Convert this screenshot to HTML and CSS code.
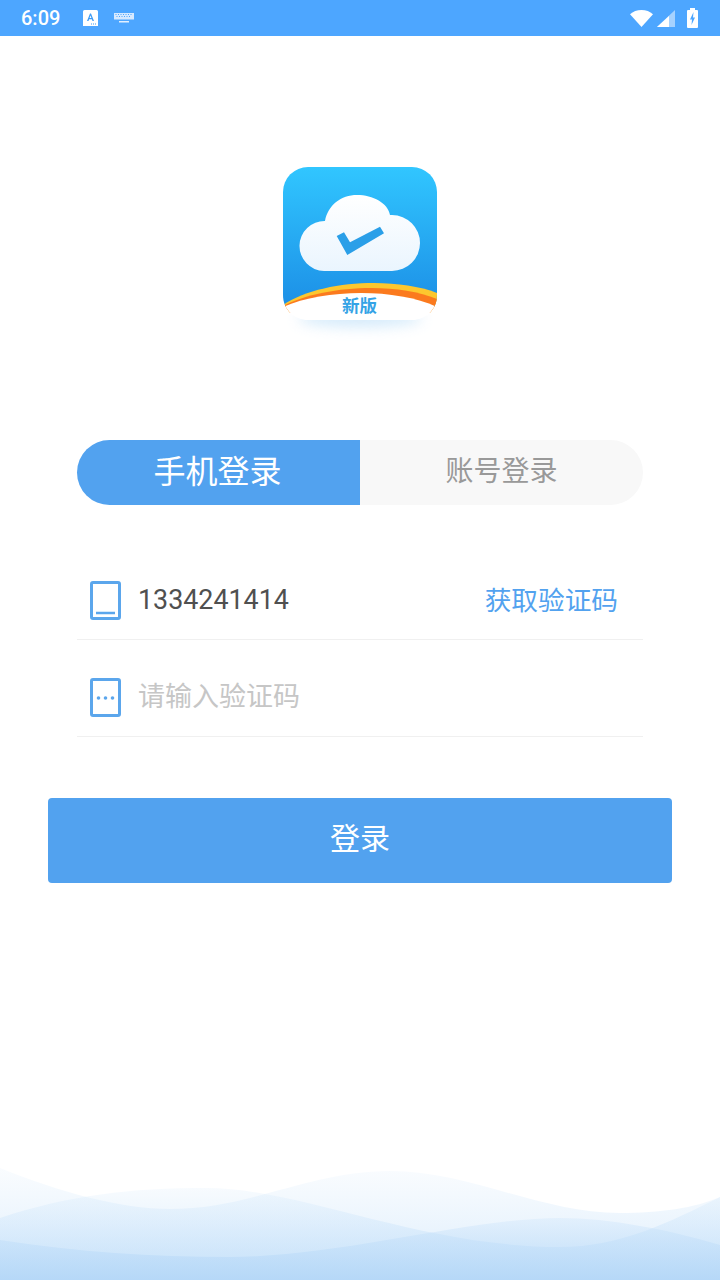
FILE: index.html
```html
<!DOCTYPE html>
<html lang="zh-CN">
<head>
<meta charset="utf-8">
<title>登录</title>
<link rel="stylesheet" href="styles.css">
</head>
<body>
<div class="screen">
  <header class="status-bar">
    <div class="status-left">
      <span class="clock">6:09</span>
      <svg class="ico-input" viewBox="0 0 15 16" width="15" height="16"><path d="M0 1.500A1.500 1.500 0 0 1 1.500 0H13.500A1.500 1.500 0 0 1 15 1.500V16H0Z" fill="#fff"/><path d="M4 11 7 3.500H8L11 11H9.500L8.900 9.300H6.100L5.500 11ZM6.600 8H8.400L7.500 5.400Z" fill="#3f9cf5"/><path d="M8 13.500h1v1H8zM10 13.500h1v1h-1zM12 13.500h1v1h-1z" fill="#3f9cf5"/></svg>
      <svg class="ico-keys" viewBox="0 0 20 10" width="20" height="10"><path d="M0 0h20v6.500H0z" fill="#d6e9ff"/><path d="M1.500 1h1v1h-1zM4 1h1v1H4zM6.500 1h1v1h-1zM9 1h1v1H9zM11.500 1h1v1h-1zM14 1h1v1h-1zM16.500 1h1v1h-1zM2.500 3h1v1h-1zM5 3h1v1H5zM7.500 3h1v1h-1zM10 3h1v1h-1zM12.500 3h1v1h-1zM15 3h1v1h-1z" fill="#4da6ff"/><path d="M5 8h10v1.500H5z" fill="#e3f0ff"/></svg>
    </div>
    <div class="status-right">
      <svg class="ico-wifi" viewBox="0 0 23 17" width="23" height="17"><path d="M11.500 17 0 4.200C3 1.600 7 0 11.500 0S20 1.600 23 4.200Z" fill="#fff"/></svg>
      <svg class="ico-signal" viewBox="0 0 18 17" width="18" height="17"><path d="M18 0V17H0Z" fill="#a6d2ff"/><path d="M12 6V17H0Z" fill="#fff"/></svg>
      <svg class="ico-battery" viewBox="0 0 11 20" width="11" height="20"><path d="M3 0H8V2H10A1 1 0 0 1 11 3V19A1 1 0 0 1 10 20H1A1 1 0 0 1 0 19V3A1 1 0 0 1 1 2H3Z" fill="#fff"/><path d="M6.500 4 3 11.500H5L4.500 17 8 9.500H6Z" fill="#4da6ff"/></svg>
    </div>
  </header>

  <main class="content">
    <svg class="logo" viewBox="0 0 180 190" width="180" height="190">
      <defs>
        <linearGradient id="tile" x1="0" y1="0" x2="0" y2="1">
          <stop offset="0" stop-color="#31c6ff"/>
          <stop offset="1" stop-color="#1c8fe6"/>
        </linearGradient>
        <linearGradient id="puff" x1="0" y1="0" x2="0" y2="1">
          <stop offset="0" stop-color="#ffffff"/>
          <stop offset="1" stop-color="#eaf5fe"/>
        </linearGradient>
        <filter id="soft" x="-30%" y="-100%" width="160%" height="300%">
          <feGaussianBlur stdDeviation="7"/>
        </filter>
        <clipPath id="tile-clip">
          <path d="M38 12H142A25 25 0 0 1 167 37V140C167 155 155 165 142 165H38C25 165 13 155 13 140V37A25 25 0 0 1 38 12Z"/>
        </clipPath>
      </defs>
      <ellipse cx="90" cy="163" rx="62" ry="9" fill="#9fd0f5" opacity="0.45" filter="url(#soft)"/>
      <g clip-path="url(#tile-clip)">
        <rect x="13" y="12" width="154" height="140" fill="url(#tile)"/>
        <path d="M13 150C50 125 125 122 167 138V158H13Z" fill="#fdc72e"/>
        <path d="M13 151C50 131 125 126 167 144V158H13Z" fill="#fb7a1e"/>
        <path d="M13 152C55 134 125 133 167 152V170H13Z" fill="#fff"/>
      </g>
      <path d="M54 116H122A28 28 0 0 0 122 60H120C118 48 103 40 87 40C71 40 58 50 55 66A25 25 0 0 0 54 116Z" fill="url(#puff)"/>
      <path d="M66.700 81 74 77.300 80 87.300 110 71.700 114 78.300 77.300 100Z" fill="#2a9fe8"/>
      <text class="logo-badge" x="89.500" y="157" text-anchor="middle">新版</text>
    </svg>

    <div class="tabs">
      <div class="tab tab-active">手机登录</div>
      <div class="tab tab-idle">账号登录</div>
    </div>

    <div class="form">
      <div class="row">
        <svg class="row-icon" viewBox="0 0 31 39" width="31" height="39"><rect x="1.500" y="1.500" width="28" height="36" rx="1.500" fill="none" stroke="#5ba6ec" stroke-width="3"/><path d="M6 32H25" stroke="#5ba6ec" stroke-width="2.500" fill="none"/></svg>
        <span class="row-value">1334241414</span>
        <span class="row-action">获取验证码</span>
      </div>
      <div class="row">
        <svg class="row-icon" viewBox="0 0 31 39" width="31" height="39"><rect x="1.500" y="1.500" width="28" height="36" rx="1.500" fill="none" stroke="#5ba6ec" stroke-width="3"/><circle cx="8.500" cy="20" r="1.800" fill="#5ba6ec"/><circle cx="15.500" cy="20" r="1.800" fill="#5ba6ec"/><circle cx="22.500" cy="20" r="1.800" fill="#5ba6ec"/></svg>
        <span class="row-hint">请输入验证码</span>
      </div>
    </div>

    <button class="submit" type="button">登录</button>
  </main>

  <svg class="waves" viewBox="0 0 720 130" width="720" height="130" preserveAspectRatio="none">
    <defs>
      <linearGradient id="wave-a" gradientUnits="userSpaceOnUse" x1="0" y1="18" x2="0" y2="130">
        <stop offset="0" stop-color="#cfe6fb" stop-opacity="0.12"/>
        <stop offset="1" stop-color="#bcdcf9" stop-opacity="0.55"/>
      </linearGradient>
      <linearGradient id="wave-b" gradientUnits="userSpaceOnUse" x1="0" y1="38" x2="0" y2="130">
        <stop offset="0" stop-color="#c6e2fa" stop-opacity="0.14"/>
        <stop offset="1" stop-color="#b5d8f8" stop-opacity="0.6"/>
      </linearGradient>
      <linearGradient id="wave-c" gradientUnits="userSpaceOnUse" x1="0" y1="68" x2="0" y2="130">
        <stop offset="0" stop-color="#c8e2fa" stop-opacity="0.3"/>
        <stop offset="1" stop-color="#b2d6f7" stop-opacity="0.8"/>
      </linearGradient>
    </defs>
    <path d="M0 18C60 42 120 59 170 59C250 59 310 21 390 21C470 21 540 63 620 63C660 63 695 58 720 47V130H0Z" fill="url(#wave-a)"/>
    <path d="M0 68C70 45 130 38 207 38C300 38 420 97 560 97C620 97 670 72 720 47V130H0Z" fill="url(#wave-b)"/>
    <path d="M0 90C80 102 150 107 230 107C340 107 470 68 560 68C610 68 670 80 720 95V130H0Z" fill="url(#wave-c)"/>
  </svg>
</div>
</body>
</html>
```

FILE: styles.css
```css
* { box-sizing: border-box; }

html, body {
  margin: 0;
  padding: 0;
  background: #fff;
}

.screen {
  position: relative;
  width: 720px;
  height: 1280px;
  overflow: hidden;
  font-family: "Noto Sans CJK SC", "Noto Sans", Roboto, sans-serif;
}

/* top system bar */
.status-bar {
  height: 36px;
  background: #4da6ff;
  display: flex;
  justify-content: space-between;
  align-items: center;
  padding: 0 22px 0 21px;
}

.status-left, .status-right {
  display: flex;
  align-items: center;
}

.clock {
  font-family: Roboto, sans-serif;
  font-weight: 500;
  font-size: 20px;
  color: #fff;
  width: 62px;
}

.ico-keys { margin-left: 16px; }
.ico-signal { margin-left: 4px; }
.ico-battery { margin-left: 12px; }

/* page body */
.content {
  display: flex;
  flex-direction: column;
  align-items: center;
}

.logo {
  display: block;
  margin-top: 119px;
  margin-bottom: 95px;
}

.logo-badge {
  font-family: "Noto Sans CJK SC", sans-serif;
  font-weight: 700;
  font-size: 17.500px;
  fill: #35a3e6;
}

.tabs {
  display: flex;
  width: 566px;
  height: 65px;
}

.tab {
  flex: 0 0 50%;
  display: flex;
  align-items: center;
  justify-content: center;
  padding-bottom: 7px;
}

.tab-active {
  background: #52a2ef;
  color: #fff;
  font-size: 32px;
  padding-right: 2px;
  border-radius: 33px 0 0 33px;
}

.tab-idle {
  background: #f8f8f8;
  color: #999;
  font-size: 28px;
  border-radius: 0 33px 33px 0;
}

.form {
  width: 566px;
  margin-top: 38px;
}

/* label text sits slightly above the icon's centre line */
.row {
  display: flex;
  align-items: center;
  height: 97px;
  padding: 19px 25px 0 13px;
  border-bottom: 1px solid #f0f0f0;
  font-size: 27px;
}

.row-icon {
  flex: none;
  margin-right: 17px;
}

.row-value {
  flex: 1;
  font-family: Roboto, sans-serif;
  font-size: 26.850px;
  color: #505050;
  padding-bottom: 1px;
}

.row-action {
  color: #52a2ef;
  font-size: 26.670px;
  padding-bottom: 5px;
}

.row-hint {
  color: #c6c6c6;
  padding-bottom: 7px;
}

.submit {
  display: block;
  width: 624px;
  height: 85px;
  margin-top: 61px;
  padding: 0 0 10px;
  border: 0;
  border-radius: 4px;
  background: #52a2ef;
  color: #fff;
  font-family: inherit;
  font-size: 30px;
}

/* decorative band along the bottom edge */
.waves {
  position: absolute;
  left: 0;
  bottom: 0;
  display: block;
}
```
